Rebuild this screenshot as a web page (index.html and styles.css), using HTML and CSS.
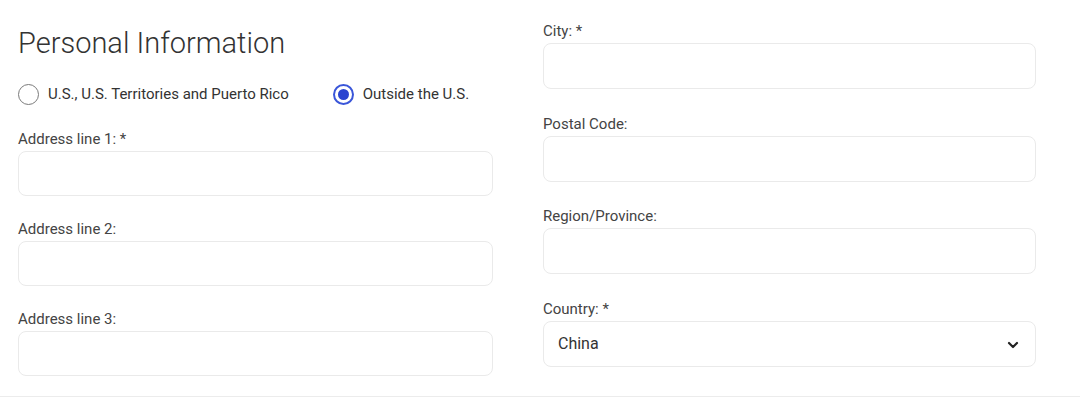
FILE: index.html
```html
<!DOCTYPE html>
<html lang="en">
<head>
  <meta charset="UTF-8" />
  <meta name="viewport" content="width=device-width, initial-scale=1.0" />
  <title>Personal Information</title>
  <link rel="stylesheet" href="styles.css">
</head>
<body>
  <form class="form">
    <div class="col col-left">
      <h1>Personal Information</h1>

      <div class="radios">
        <label class="radio">
          <input type="radio" name="location" value="us" />
          <span class="dot"></span>
          U.S., U.S. Territories and Puerto Rico
        </label>
        <label class="radio">
          <input type="radio" name="location" value="outside" checked />
          <span class="dot"></span>
          Outside the U.S.
        </label>
      </div>

      <div class="field">
        <label for="addr1">Address line 1: *</label>
        <input type="text" id="addr1" />
      </div>
      <div class="field">
        <label for="addr2">Address line 2:</label>
        <input type="text" id="addr2" />
      </div>
      <div class="field">
        <label for="addr3">Address line 3:</label>
        <input type="text" id="addr3" />
      </div>
    </div>

    <div class="col col-right">
      <div class="field">
        <label for="city">City: *</label>
        <input type="text" id="city" />
      </div>
      <div class="field">
        <label for="postal">Postal Code:</label>
        <input type="text" id="postal" />
      </div>
      <div class="field">
        <label for="region">Region/Province:</label>
        <input type="text" id="region" />
      </div>
      <div class="field">
        <label for="country">Country: *</label>
        <div class="select-wrap">
          <select id="country">
            <option>China</option>
            <option>Canada</option>
            <option>Japan</option>
          </select>
          <svg class="chevron" width="12" height="8" viewBox="0 0 12 8">
            <path d="M2 2 L6 6 L10 2" fill="none" stroke="#222" stroke-width="2.2" stroke-linecap="round" stroke-linejoin="round" />
          </svg>
        </div>
      </div>
    </div>
  </form>
</body>
</html>
```

FILE: styles.css
```css
* {
  box-sizing: border-box;
}
body {
  margin: 0;
  font-family: Roboto, "Liberation Sans", sans-serif;
  color: #444;
  background: #fff;
}
.form {
  display: grid;
  grid-template-columns: 475px 493px;
  column-gap: 50px;
  align-items: start;
  height: 397px;
  padding: 0 18px;
  border-bottom: 1px solid #ececec;
}
h1 {
  margin: 0;
  font-size: 29px;
  font-weight: 300;
  line-height: 34px;
  color: #333;
}
.col-left {
  padding-top: 26px;
}
.col-right {
  padding-top: 21px;
}
.radios {
  display: flex;
  align-items: center;
  gap: 44px;
  height: 22px;
  margin: 23px 0 24px;
}
.radio {
  display: flex;
  align-items: center;
  gap: 9px;
  font-size: 15px;
  color: #333;
  cursor: pointer;
}
.radio input {
  display: none;
}
.dot {
  width: 21px;
  height: 21px;
  border: 1.5px solid #7a7a7a;
  border-radius: 50%;
  display: flex;
  align-items: center;
  justify-content: center;
}
.radio input:checked + .dot {
  border: 2px solid #3a56d9;
}
.radio input:checked + .dot::after {
  content: "";
  width: 11px;
  height: 11px;
  border-radius: 50%;
  background: #2a44d0;
}
.field {
  margin-bottom: 23px;
}
.col-right .field {
  margin-bottom: 24.5px;
}
.field label {
  display: block;
  font-size: 15px;
  line-height: 20px;
  margin-bottom: 2px;
  color: #444;
}
.field input,
.field select {
  display: block;
  width: 100%;
  height: 45px;
  border: 1px solid #eaeaea;
  border-radius: 8px;
  background: #fff;
  font-family: inherit;
  font-size: 16px;
  color: #333;
  padding: 0 14px;
  outline: none;
}
.col-right .field input,
.col-right .field select {
  height: 46px;
}
.select-wrap {
  position: relative;
}
.field select {
  appearance: none;
  -webkit-appearance: none;
}
.chevron {
  position: absolute;
  right: 17px;
  top: 20px;
  pointer-events: none;
}
```
